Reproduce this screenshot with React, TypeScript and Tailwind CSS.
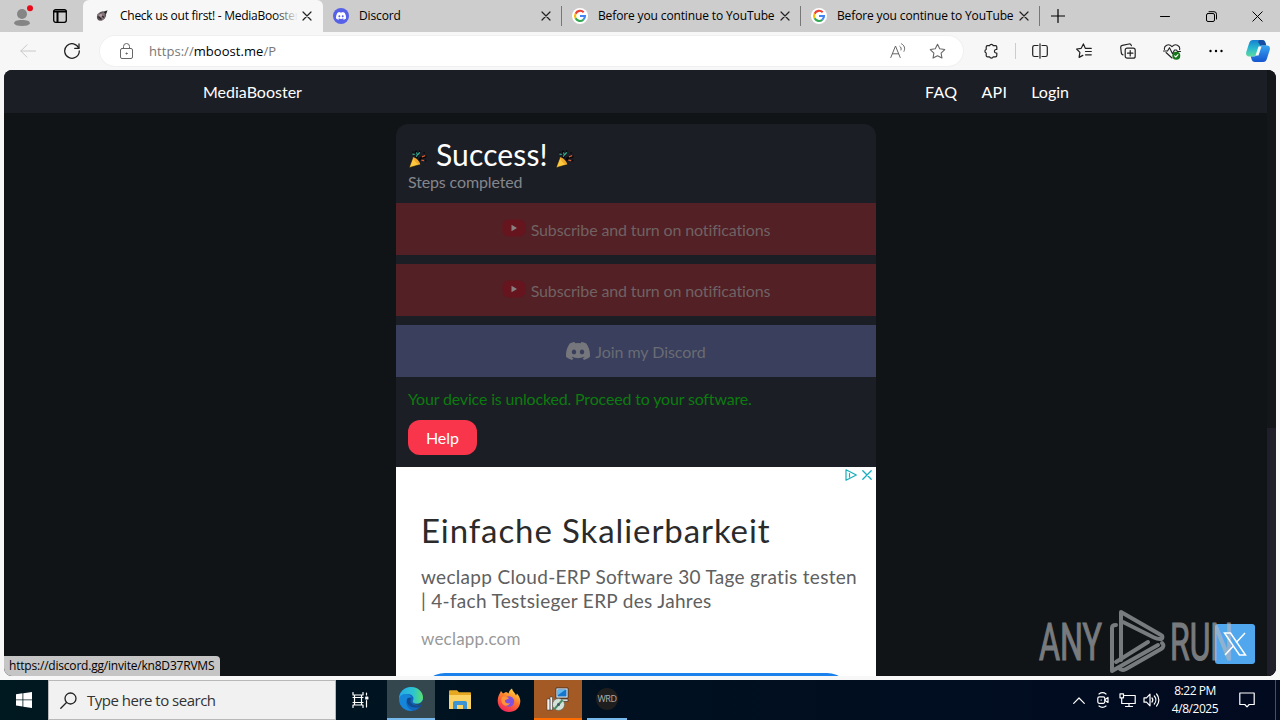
import type { ReactNode } from "react";

const UI = "font-['Open_Sans','Noto_Sans',sans-serif]";

type IconProps = { box: string; className: string; children: ReactNode; sw?: number };

function Line({ box, className, children, sw = 1 }: IconProps) {
  return (
    <svg viewBox={box} className={`shrink-0 ${className}`} fill="none" stroke="currentColor" strokeWidth={sw} strokeLinecap="round" strokeLinejoin="round">
      {children}
    </svg>
  );
}

function GoogleIcon() {
  return (
    <svg viewBox="0 0 16 16" className="h-4 w-4 shrink-0">
      <circle cx="8" cy="8" r="8" fill="#fff" />
      <g fill="none" strokeWidth="2.1">
        <path d="M11.7 4.3A5 5 0 0 0 3.6 5.7" stroke="#ea4335" />
        <path d="M3.6 5.7a5 5 0 0 0 0 4.6" stroke="#fbbc05" />
        <path d="M3.6 10.3a5 5 0 0 0 7.7 1.4" stroke="#34a853" />
        <path d="M11.3 11.7A5 5 0 0 0 13 8H8" stroke="#4285f4" />
      </g>
    </svg>
  );
}

const DISCORD =
  "M20.3 4.4A19.8 19.8 0 0 0 15.4 2.9l-.7 1.3a18.3 18.3 0 0 0-5.4 0l-.7-1.3a19.7 19.7 0 0 0-4.9 1.5C.5 9-.3 13.6.1 18.1a20 20 0 0 0 6 3l1.3-2a13 13 0 0 1-1.9-.9l.4-.4a14.3 14.3 0 0 0 12.2 0l.4.4a12.3 12.3 0 0 1-1.9.9l1.3 2a19.9 19.9 0 0 0 6-3c.5-5.2-.8-9.7-3.6-13.7ZM8 15.3c-1.2 0-2.2-1.1-2.2-2.4s1-2.4 2.2-2.4 2.2 1.1 2.2 2.4-1 2.4-2.2 2.4Zm8 0c-1.2 0-2.2-1.1-2.2-2.4s1-2.4 2.2-2.4 2.2 1.1 2.2 2.4-1 2.4-2.2 2.4Z";

function DiscordBadge() {
  return (
    <svg viewBox="0 0 16 16" className="h-4 w-4 shrink-0">
      <circle cx="8" cy="8" r="8" fill="#5761e8" />
      <path d={DISCORD} fill="#fff" transform="translate(3 2.8) scale(.42)" />
    </svg>
  );
}

function RocketIcon() {
  return (
    <svg viewBox="0 0 16 16" className="h-4 w-4 shrink-0">
      <ellipse cx="7.5" cy="8" rx="5.2" ry="4" fill="#5d5256" transform="rotate(-45 7.5 8)" />
      <path d="M3 6l5-1 4-2.5-1.500 4 .5 4-3.500 2.500z" fill="#82747a" />
      <path d="M4.500 8.500l3 3M6 6l4 3.500" stroke="#2a2427" strokeWidth="1.2" />
      <circle cx="6.800" cy="7.200" r="1.500" fill="#b59da3" />
      <path d="M9.500 4l4-1.800-1.500 4z" fill="#222" />
    </svg>
  );
}

function CloseIcon() {
  return (
    <Line box="0 0 10 10" className="h-2.5 w-2.5 text-[#222]" sw={1.2}>
      <path d="M1 1l8 8M9 1L1 9" />
    </Line>
  );
}

function Tab({ icon, title, active }: { icon: ReactNode; title: string; active?: boolean }) {
  return (
    <div
      className={
        active
          ? "flex h-8 w-[240px] shrink-0 items-center rounded-t-md bg-[#f7f7f7] pl-[11px] pr-[11px]"
          : "flex h-8 w-[239px] shrink-0 items-center pl-[10px] pr-[10px]"
      }
    >
      {icon}
      <span
        className={
          active
            ? "relative ml-[10px] w-[178px] overflow-hidden whitespace-nowrap text-xs tracking-[-0.27px] text-black"
            : "ml-[10px] flex-1 whitespace-nowrap text-xs tracking-[-0.13px] text-black"
        }
      >
        {title}
        {active && <span className="absolute inset-y-0 right-0 w-6 bg-gradient-to-r from-transparent to-[#f7f7f7]" />}
      </span>
      <span className="ml-auto">
        <CloseIcon />
      </span>
      {!active && <span className="-mr-[10px] ml-[10px] h-5 w-px bg-[#777]" />}
    </div>
  );
}

function TabBar() {
  return (
    <div className={`flex h-8 items-center bg-[#cdcdcd] ${UI}`}>
      <div className="flex w-[83px] shrink-0 items-center gap-[21px] pl-[13px]">
        <svg viewBox="0 0 20 24" className="h-6 w-5 shrink-0">
          <circle cx="9" cy="10" r="5" fill="#858585" />
          <path d="M1 19.500c0-2.500 3-3.500 8-3.500s8 1 8 3.500c-1 1.700-4 2.500-8 2.500s-7-.8-8-2.500z" fill="#858585" />
          <circle cx="17" cy="4.200" r="3" fill="#e80a18" />
        </svg>
        <Line box="0 0 14 14" className="-ml-[1px] h-[14px] w-[14px] text-black" sw={1.3}>
          <rect x=".7" y=".7" width="12.6" height="12.6" rx="2" />
          <path d="M1 2.500h12M4.500 3v10" strokeWidth="2" />
        </Line>
      </div>
      <Tab active icon={<RocketIcon />} title="Check us out first! - MediaBooster" />
      <Tab icon={<DiscordBadge />} title="Discord" />
      <Tab icon={<GoogleIcon />} title="Before you continue to YouTube" />
      <Tab icon={<GoogleIcon />} title="Before you continue to YouTube" />
      <Line box="0 0 14 14" className="ml-[11px] h-[14px] w-[14px] text-black" sw={1.2}>
        <path d="M7 .5v13M.5 7h13" />
      </Line>
      <div className="ml-auto flex items-center text-black">
        <div className="flex w-[46px] justify-center">
          <Line box="0 0 10 10" className="h-[10px] w-[10px]">
            <path d="M.5 5.500h9" />
          </Line>
        </div>
        <div className="flex w-[46px] justify-center">
          <Line box="0 0 11 11" className="h-[11px] w-[11px]">
            <rect x=".5" y="2.5" width="8" height="8" rx="1.5" />
            <path d="M3 .7h5a2.5 2.5 0 0 1 2.5 2.5V8" />
          </Line>
        </div>
        <div className="flex w-[46px] justify-center">
          <Line box="0 0 11 11" className="h-[11px] w-[11px]">
            <path d="M.8.8l9.4 9.4M10.2.8L.8 10.2" />
          </Line>
        </div>
      </div>
    </div>
  );
}

function Cell({ children }: { children: ReactNode }) {
  return <div className="flex w-11 shrink-0 justify-center">{children}</div>;
}

const STAR = "M8 1.2l2.1 4.3 4.7.7-3.4 3.3.8 4.7L8 12l-4.2 2.2.8-4.7L1.2 6.2l4.7-.7z";

function Toolbar() {
  return (
    <div className={`flex h-[38px] items-center bg-[#f7f7f7] text-[#222] ${UI}`}>
      <div className="flex w-[100px] shrink-0 items-center">
        <div className="flex w-14 justify-center">
          <Line box="0 0 16 14" className="h-[14px] w-4 text-[#c8c8c8]">
            <path d="M15.500 7H.8M7 .8L.8 7 7 13.200" />
          </Line>
        </div>
        <div className="flex w-8 justify-center">
          <Line box="0 0 16 16" className="h-4 w-4" sw={1.3}>
            <path d="M14.8 5.3A7.3 7.3 0 1 0 15.3 8" />
            <path d="M15 1v4.3h-4.3" />
          </Line>
        </div>
      </div>
      <div className="flex h-[30px] w-[863px] shrink-0 items-center rounded-full bg-white pl-[20px] pr-[17px] shadow-[0_0_0_1px_#f0f0f0]">
        <Line box="0 0 13 16" className="h-4 w-[13px] text-[#666]">
          <rect x=".5" y="5.5" width="12" height="10" rx="1.5" />
          <path d="M3.5 5.5v-2a3 3 0 0 1 6 0v2" />
          <circle cx="6.5" cy="10.5" r=".6" fill="currentColor" />
        </Line>
        <span className="ml-4 whitespace-nowrap pt-px text-[13px] tracking-[0.05px] text-[#777]">
          https://<span className="text-black">mboost.me</span>/P
        </span>
        <div className="ml-auto flex items-center gap-[23px] text-[#666]">
          <Line box="0 0 16 16" className="h-4 w-4">
            <path d="M.8 14.500L5.500 3l4.700 11.500M2.400 10.800h6.200M9.800 3.300c1.300.8 1.700 2.300 1.200 3.700M11.500.8c3 1.500 4 4.700 2.500 7.500" />
          </Line>
          <Line box="0 0 16 16" className="h-[17px] w-[17px]">
            <path d={STAR} />
          </Line>
        </div>
      </div>
      <div className="ml-[6px] flex items-center">
        <Cell>
          <Line box="0 0 16 16" className="h-4 w-4" sw={1.2}>
            <path d="M4.500 2.700h2a2 2 0 0 1 3.800 0h2.200c.8 0 1.300.5 1.300 1.300v2.500h-1a1.800 1.800 0 0 0 0 3.500h1v2.500c0 .8-.5 1.300-1.300 1.300h-2.200a2 2 0 0 1-3.800 0h-2c-.8 0-1.300-.5-1.300-1.300V10a1.900 1.900 0 0 1 0-3.600V4c0-.8.5-1.300 1.300-1.300z" />
          </Line>
        </Cell>
        <span className="mx-[2px] h-4 w-px bg-[#ccc]" />
        <Cell>
          <Line box="0 0 16 16" className="h-4 w-4" sw={1.2}>
            <path d="M6 2.500H2.500a1.800 1.800 0 0 0-1.800 1.800v7.400c0 1 .8 1.800 1.800 1.800H6M10 2.500h3.500c1 0 1.800.8 1.800 1.800v7.400c0 1-.8 1.800-1.800 1.800H10M8 .8v14.400" />
          </Line>
        </Cell>
        <Cell>
          <Line box="0 0 16 16" className="h-4 w-4" sw={1.2}>
            <path d="M9.300 5.300L7.400.9 5.200 5.300.6 6l3.300 3.300-.8 5.100 3.700-2M9.300 5.300h6M9.500 8.500h5.800M9.500 11.800h5.800" />
          </Line>
        </Cell>
        <Cell>
          <Line box="0 0 16 16" className="h-4 w-4" sw={1.2}>
            <rect x="5.2" y="5.2" width="10" height="10" rx="2" />
            <path d="M10.200 7.500v5.400M7.500 10.200h5.400M3 11.800C1.900 11.500 1.500 10.800 1.300 10L.7 4.300c0-1 .6-1.800 1.600-2L9 1c1.200-.2 2 .4 2.400 1.600" />
          </Line>
        </Cell>
        <Cell>
          <svg viewBox="0 0 18 17" className="h-[17px] w-[18px]" fill="none" stroke="#222" strokeWidth="1.1" strokeLinecap="round" strokeLinejoin="round">
            <path d="M1.500 6.500C.7 2.700 5.500-.3 9 3.600c3.500-3.900 8.500-.9 7.600 3M9 15L3 9.500M.5 8h4l2-3.300 3 6 2-3.700h2l1 1.500h3" />
            <circle cx="13.3" cy="12.7" r="4" fill="#16761a" stroke="none" />
            <path d="M11.600 12.800l1.200 1.200 2.200-2.300" stroke="#fff" />
          </svg>
        </Cell>
        <Cell>
          <svg viewBox="0 0 14 4" className="h-1 w-[14px]">
            <circle cx="1.5" cy="2" r="1.2" />
            <circle cx="7" cy="2" r="1.2" />
            <circle cx="12.5" cy="2" r="1.2" />
          </svg>
        </Cell>
        <div className="flex w-10 justify-center">
          <svg viewBox="0 0 24 22" className="h-[22px] w-6">
            <defs>
              <linearGradient id="cpA" x1="0" y1="0" x2="0" y2="1">
                <stop offset="0" stopColor="#1680d0" />
                <stop offset=".5" stopColor="#28b8d0" />
                <stop offset="1" stopColor="#5fd9a0" />
              </linearGradient>
              <linearGradient id="cpB" x1="0" y1="0" x2="0" y2="1">
                <stop offset="0" stopColor="#39a5f0" />
                <stop offset="1" stopColor="#1455d0" />
              </linearGradient>
            </defs>
            <path d="M7 0h9c2 0 3 1 3.500 3l.8 2.500h-4c-2 0-3 1-3.600 3l-1.500 5c-.6 2-1.600 3-3.700 3H3C.5 16.500-.4 14.500.3 12L3 3.500C3.700 1 5 0 7 0z" fill="url(#cpA)" />
            <path d="M13 0h3c2 0 3 1 3.500 3l.8 2.500h-6L12 2z" fill="#184fa5" />
            <path d="M16.500 5.500H21c2.500 0 3.400 2 2.700 4.500L21 18.500c-.7 2.500-2 3.500-4 3.500H9c-2 0-3-1-3.500-3l-.7-2.500h3c2 0 3-1 3.600-3l1.500-5c.6-2 1.600-3 3.600-3z" fill="url(#cpB)" />
            <path d="M12.500 6.500h3l-3 9h-3z" fill="#f7f7f7" />
          </svg>
        </div>
      </div>
    </div>
  );
}

function Popper() {
  return (
    <svg viewBox="0 0 18 18" className="h-5 w-5 shrink-0">
      <path d="M7.500 8C9 5.500 8.500 3.500 6.500 2M10 10c1.500-2.500 3.500-3.500 6.500-3" stroke="#08080a" strokeWidth="2.2" fill="none" />
      <path d="M10 2h1M14 3.500h1M15.500 10.500h1M4 3h1" stroke="#08080a" strokeWidth="1.6" />
      <path d="M1 16.800L4.500 7.500c2 .7 5.500 4 6.500 6.500z" fill="#ffc83d" stroke="#111" strokeWidth=".5" />
      <path d="M4.500 7.500c2-.2 6.500 4 6.500 6.500-2.500.2-6.500-4-6.500-6.500z" fill="#f0a92c" />
      <path d="M7.500 7c1-1.300 1-2.800.2-4M4 4.500l2 .5M9 5l1.500-2" stroke="#37b89a" fill="none" />
      <path d="M12 10l2.500.5M12.500 7l3-1" stroke="#d35a33" strokeWidth="1.2" />
    </svg>
  );
}

function StepButton({ kind, label }: { kind: "youtube" | "discord"; label: string }) {
  return (
    <div
      className={
        kind === "youtube"
          ? "flex h-[52px] items-center justify-center bg-[#522025] pt-[2px] text-[#716263]"
          : "flex h-[52px] items-center justify-center bg-[#393f5c] pt-[2px] text-[#6a6c74]"
      }
    >
      {kind === "youtube" ? (
        <svg viewBox="0 0 24 20" className="mb-1 mr-[5px] h-5 w-6 shrink-0">
          <rect x=".5" y="1.5" width="23" height="17" rx="6" fill="#66141d" />
          <path d="M9.500 6.800v6.400l5.500-3.200z" fill="#8b8080" />
        </svg>
      ) : (
        <svg viewBox="0 0 24 24" className="mb-[2px] mr-[5px] h-6 w-6 shrink-0">
          <path d={DISCORD} fill="#76777c" />
        </svg>
      )}
      <span className={kind === "youtube" ? "text-base leading-5 tracking-[-0.14px]" : "text-base leading-5 tracking-[-0.05px]"}>{label}</span>
    </div>
  );
}

function Ad() {
  return (
    <div className="flex h-[209px] flex-col overflow-hidden bg-white font-[Lato,sans-serif]">
      <div className="flex h-4 shrink-0 items-center justify-end gap-[5px] pr-[4px] text-[#15aebd]">
        <Line box="0 0 12 12" className="h-3 w-3" sw={1.2}>
          <path d="M1 .8l10.300 5.200L1 11.200zM4.500 4.500v3.500" />
        </Line>
        <Line box="0 0 10 10" className="h-[10px] w-[10px]" sw={1.3}>
          <path d="M.8.8l8.400 8.400M9.200.8L.8 9.200" />
        </Line>
      </div>
      <div className="mt-[27px] whitespace-nowrap pl-[25px] text-[33px] leading-10 tracking-[0.9px] text-[#2b2b2b]">Einfache Skalierbarkeit</div>
      <div className="mt-[15px] whitespace-nowrap pl-[25px] text-[19px] leading-6 tracking-[0.31px] text-[#606060]">
        weclapp Cloud-ERP Software 30 Tage gratis testen
        <br />| 4-fach Testsieger ERP des Jahres
      </div>
      <div className="mt-[15px] pl-[25px] text-[17px] leading-[22px] tracking-[0.2px] text-[#999]">weclapp.com</div>
      <div className="mx-[25px] mt-[23px] h-12 shrink-0 rounded-[24px] bg-[#1a80ec]" />
    </div>
  );
}

function Page() {
  return (
    <div className="mx-1 flex h-[606px] overflow-hidden rounded-lg bg-[#111417] font-[Lato,sans-serif] text-base">
      <div className="flex w-[1263px] flex-col">
        <header className="flex h-[43px] shrink-0 items-center bg-[#1c1e26] pl-[199px] pr-[198px] text-white">
          <span>MediaBooster</span>
          <nav className="ml-auto flex gap-6">
            <span className="tracking-[0.3px]">FAQ</span>
            <span className="tracking-[0.3px]">API</span>
            <span>Login</span>
          </nav>
        </header>
        <main className="ml-[392px] mt-[11px] w-[480px] rounded-t-xl bg-[#1c1e26]">
          <div className="h-[79px] px-3 pt-[10px]">
            <div className="flex h-10 items-center text-[30px] leading-10 tracking-[0.13px] text-white">
              <span className="mr-[8px] mt-[10px]">
                <Popper />
              </span>
              Success!
              <span className="ml-[7px] mt-[10px]">
                <Popper />
              </span>
            </div>
            <div className="-mt-[2px] leading-5 tracking-[-0.14px] text-[#85868b]">Steps completed</div>
          </div>
          <div className="flex flex-col gap-[9px]">
            <StepButton kind="youtube" label="Subscribe and turn on notifications" />
            <StepButton kind="youtube" label="Subscribe and turn on notifications" />
            <StepButton kind="discord" label="Join my Discord" />
          </div>
          <div className="h-[90px] px-3 pt-[11px]">
            <div className="leading-[21px] tracking-[-0.17px] text-[#0b7c0e]">Your device is unlocked. Proceed to your software.</div>
            <div className="mt-[11px] flex h-[35px] w-[69px] items-center justify-center rounded-xl bg-[#f8354b] text-white">Help</div>
          </div>
          <Ad />
        </main>
      </div>
      <div className="flex w-[9px] flex-col justify-end bg-[#151619]">
        <div className="h-[248px] bg-[#201e28]" />
      </div>
    </div>
  );
}

function Watermark() {
  return (
    <div className="absolute left-[1038px] top-[608px] flex h-[66px] w-[222px] items-center">
      <div className="absolute left-[177px] top-[16px] h-10 w-10 rounded-[3px] bg-[#50a7ee]" />
      <svg viewBox="0 0 222 66" className="absolute inset-0 h-[66px] w-[222px] font-[Roboto,sans-serif]" opacity=".62">
        <g fill="#b8babd" stroke="#b8babd" strokeWidth="1.2" fontSize="52">
          <text x="1" y="51.5" textLength="63" lengthAdjust="spacingAndGlyphs">ANY</text>
          <text x="132" y="51.5" textLength="63" lengthAdjust="spacingAndGlyphs">RUN</text>
        </g>
        <g fill="none" stroke="#b8babd" strokeWidth="4" strokeLinejoin="round" strokeLinecap="round">
          <path d="M78 19c-3 0-4 1-4 3v43l46-26" transform="translate(0 -2)" />
          <path d="M83 52V4l40 23c2 1 2 4-1 4-2 0-4-.5-6-1.500L85 14" />
          <path d="M81 60c2 3 5 2 7 1l35-20c3-2 3-4 1-6M78 54l32-20" />
        </g>
      </svg>
      <svg viewBox="0 0 24 24" className="absolute left-[185px] top-[24px] h-6 w-6" fill="none" stroke="#fff" strokeWidth="1.5">
        <path d="M1.500 1h6l15 22h-6zM22 1l-9 9.700M10.800 13.400L2 23" />
      </svg>
    </div>
  );
}

function Taskbar() {
  return (
    <footer className={`flex h-10 items-center bg-gradient-to-r from-[#001820] via-[#001020] to-[#020a20] text-white ${UI}`}>
      <div className="flex w-12 shrink-0 justify-center">
        <svg viewBox="0 0 16 16" className="h-4 w-4" fill="#fff">
          <path d="M0 2.200l6.500-.9v6.200H0zM7.300 1.200L16 0v7.500H7.300zM0 8.300h6.500v6.200L0 13.600zM7.300 8.300H16V16l-8.700-1.300z" />
        </svg>
      </div>
      <div className="flex h-10 w-[288px] shrink-0 items-center border border-[#b8b8b8] bg-[#f1f1f1] pl-[11px] text-[#222]">
        <Line box="0 0 17 17" className="h-[17px] w-[17px]" sw={1.3}>
          <circle cx="10.5" cy="6.5" r="5.5" />
          <path d="M6.500 10.500L.8 16.200" />
        </Line>
        <span className="ml-[10px] whitespace-nowrap text-[15px] tracking-[-0.5px] text-[#333]">Type here to search</span>
      </div>
      <div className="flex w-12 shrink-0 justify-center">
        <Line box="0 0 17 16" className="h-4 w-[17px]" sw={1.2}>
          <path d="M1 .5v2.500h10V.5M1 15.500V13h10v2.500M1 5.500h10M1 10.500h10M2.500 3v10M9.500 3v10M14.500 1v2M14.500 8.500v6.500" />
          <path d="M13.800 5h2v2h-2z" fill="currentColor" />
        </Line>
      </div>
      <div className="ml-[3px] flex h-10 w-12 shrink-0 items-center justify-center border-b-2 border-[#76b9ed] bg-[#34474e]">
        <svg viewBox="0 0 24 24" className="h-6 w-6">
          <defs>
            <linearGradient id="edA" x1="0" y1="0" x2="1" y2="0">
              <stop offset="0" stopColor="#24a9ea" />
              <stop offset=".6" stopColor="#2ec4cf" />
              <stop offset="1" stopColor="#5ae06c" />
            </linearGradient>
          </defs>
          <circle cx="12" cy="12" r="12" fill="#1366bd" />
          <path d="M0 12C0 5 5 0 12 0s12 5 12 10.500c0 4-3 6-6.500 6-3 0-4.500-1-3.500-3 2-4-2-7-6-6.500C4 7.300 1 9 0 12z" fill="url(#edA)" />
          <path d="M0 12c1-4 4-5.500 7.500-5 3 .4 5 2 5 4-3-1-6 2-5 6 .6 3 3 5.500 6 6.500C6 25 0 19 0 12z" fill="#1686d8" />
          <path d="M8 12c-1 6 4 10 13 8 .7-.6 1.700-2 2-3-3 2-9 2.500-11-1.500-1.300-2.500.5-4 .5-4.500-2-.5-4 0-4.500 1z" fill="#104a91" />
          <path d="M24 13c-1 2.500-3.500 4.500-7 4.200-2.500-.2-4-1.500-3-3.700-.8 3 2.500 5.500 6 4.500L24 17z" fill="#34474e" />
        </svg>
      </div>
      <div className="flex w-[50px] shrink-0 justify-center">
        <svg viewBox="0 0 22 20" className="h-5 w-[22px]">
          <path d="M0 1.500C0 .7.500.3 1 .3h7l2 2h11c.6 0 1 .4 1 1V19H0z" fill="#e6a821" />
          <path d="M0 5h22v14H0z" fill="#fbd365" />
          <path d="M4 19v-6c0-1.300.7-2 2-2h10c1.300 0 2 .7 2 2v6h-4v-4H8v4z" fill="#3c94d2" />
        </svg>
      </div>
      <div className="flex w-12 shrink-0 justify-center">
        <svg viewBox="0 0 24 24" className="h-6 w-6">
          <defs>
            <linearGradient id="ff" x1=".8" y1="0" x2=".3" y2="1">
              <stop offset="0" stopColor="#ffe141" />
              <stop offset=".5" stopColor="#ff742e" />
              <stop offset="1" stopColor="#f1235d" />
            </linearGradient>
          </defs>
          <path d="M3 5l1-2 2 2.500 3-1.500c1 0 1.500 1 2.500 1.500C12 3.500 13 1.500 15 .5c.5 3 3 4 4 7l1-2c2 2.500 3.500 5 3.300 8C23 20 18 24 12 24S.7 19.500.7 13C.7 10 1.500 7 3 5z" fill="url(#ff)" />
          <circle cx="12" cy="13.5" r="5.2" fill="#8050df" />
          <path d="M5 9c2-1 5 0 7 1-1 2-4 1-4 3s3 3 5 2c-1 3-6 4-8 0-1-2-1-4 0-6z" fill="#ff9538" />
        </svg>
      </div>
      <div className="ml-[1px] flex h-10 w-12 shrink-0 items-center justify-center border-b-2 border-[#ff6c00] bg-[#a35a24]">
        <svg viewBox="0 0 24 24" className="h-6 w-6">
          <path d="M10 1h12v10H10z" fill="#e8e8e8" stroke="#222" strokeWidth=".7" />
          <path d="M11.500 2.500h9v7h-9z" fill="#1675cc" />
          <path d="M12 3h7l-7 5z" fill="#60b8ef" />
          <path d="M13 12h9v2.500h-9z" fill="#ddd" stroke="#222" strokeWidth=".6" />
          <circle cx="12.5" cy="17.5" r="6" fill="#d5e2d9" stroke="#56675b" strokeWidth=".6" />
          <path d="M12.500 17.500l4-4.500M12.500 17.500l-4 4.500" stroke="#488d67" strokeWidth="2" />
          <circle cx="12.5" cy="17.5" r="1.5" fill="#456" />
          <path d="M1 12h3v11H1zM4 10h2.500v13H4z" fill="#f2f2f2" stroke="#333" strokeWidth=".5" />
        </svg>
      </div>
      <div className="ml-[5px] flex h-10 w-[40px] shrink-0 items-center justify-center border-b-2 border-[#76b9ed]">
        <div className="flex h-[22px] w-[22px] items-center justify-center rounded-full bg-[#1e1e1e] text-[9px] tracking-[-0.5px] text-[#b0b0b0]">WRD</div>
      </div>
      <div className="ml-auto flex items-center">
        <div className="flex w-6 justify-center">
          <Line box="0 0 12 7" className="h-[7px] w-3" sw={1.2}>
            <path d="M.7 6.300L6 1l5.300 5.300" />
          </Line>
        </div>
        <div className="flex w-6 justify-center">
          <Line box="0 0 12 16" className="h-4 w-3" sw={1.2}>
            <rect x=".8" y="4.8" width="7" height="6.5" rx="1.5" />
            <path d="M8 7.500l3-2v5l-3-2M2 2c2-1.500 5-1.500 7 0M2 14c2 1.500 5 1.500 7 0M4 8h.5" />
          </Line>
        </div>
        <div className="flex w-6 justify-center">
          <Line box="0 0 17 15" className="h-[15px] w-[17px]" sw={1.2}>
            <path d="M5.500 2.500h10.700v8H4M10 10.500v3M6.500 13.500h7M1 .8h3.500v4H1zM2.700 5v5.500H4" />
          </Line>
        </div>
        <div className="flex w-6 justify-center">
          <Line box="0 0 17 14" className="h-[14px] w-[17px]" sw={1.2}>
            <path d="M1 4.800h2.500L7 1.200v11.600L3.500 9.200H1zM9 5c1 1.200 1 2.800 0 4M11.300 3c2 2.300 2 5.700 0 8M13.600 1c3 3.500 3 8.500 0 12" />
          </Line>
        </div>
        <div className="w-16 whitespace-nowrap text-center text-xs leading-[18px] tracking-[-0.45px]">
          8:22 PM
          <br />
          4/8/2025
        </div>
        <div className="flex w-10 justify-center">
          <Line box="0 0 16 16" className="h-4 w-4" sw={1.2}>
            <path d="M.8 1h14.400v11.500h-5L8 14.800l-2.200-2.300h-5z" />
          </Line>
        </div>
        <div className="ml-2 mr-1 h-10 w-px bg-[#47505e]" />
      </div>
    </footer>
  );
}

export default function App() {
  return (
    <div className="relative flex h-[720px] w-[1280px] flex-col overflow-hidden bg-[#f7f7f7]">
      <TabBar />
      <Toolbar />
      <Page />
      <div className="h-1 shrink-0" />
      <Taskbar />
      <Watermark />
      <div className={`absolute left-1 top-[656px] flex h-5 w-[216px] items-center rounded-bl-lg rounded-tr bg-[#c5c5c5] pl-[5px] text-xs tracking-[-0.2px] text-black ${UI}`}>
        https://discord.gg/invite/kn8D37RVMS
      </div>
    </div>
  );
}
